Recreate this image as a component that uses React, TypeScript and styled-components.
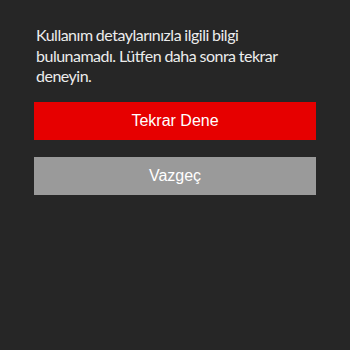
import styled, { createGlobalStyle } from 'styled-components'

const GlobalStyle = createGlobalStyle`
  html, body {
    margin: 0;
    padding: 0;
    background: #262626;
  }
`

export default function App() {
  return (
    <>
      <GlobalStyle />
      <Screen>
        <Message>
          Kullanım detaylarınızla ilgili bilgi bulunamadı. Lütfen daha sonra
          tekrar deneyin.
        </Message>
        <Actions>
          <Button variant="primary">Tekrar Dene</Button>
          <Button variant="secondary">Vazgeç</Button>
        </Actions>
      </Screen>
    </>
  )
}

const Screen = styled.div`
  width: 350px;
  height: 350px;
  box-sizing: border-box;
  padding: 25px 34px 0 34px;
  background: #262626;
  display: flex;
  flex-direction: column;
`

const Message = styled.p`
  margin: 0 0 0 2px;
  width: 262px;
  color: #ececec;
  font-family: Lato, 'Noto Sans', sans-serif;
  font-size: 16px;
  line-height: 20.5px;
  letter-spacing: -0.5px;
  word-spacing: -0.3px;
`

const Actions = styled.div`
  display: flex;
  flex-direction: column;
  gap: 17px;
  margin-top: 15px;
`

const Button = styled.button<{ variant: 'primary' | 'secondary' }>`
  height: 38px;
  border: none;
  border-radius: 0;
  width: 100%;
  background: ${(p) => (p.variant === 'primary' ? '#e60000' : '#9a9a9a')};
  color: #ffffff;
  font-family: 'Liberation Sans', Arial, sans-serif;
  font-size: 16px;
  cursor: pointer;
`
